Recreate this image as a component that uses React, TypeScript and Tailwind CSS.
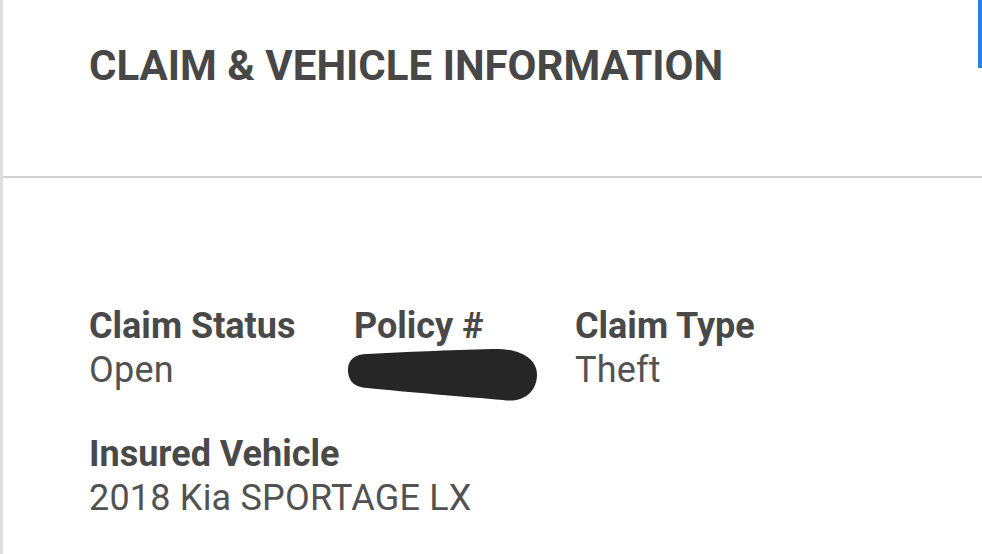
import React from "react";

const font = { fontFamily: "Roboto, 'Noto Sans', sans-serif" };

function Field({ label, value, width }: { label: string; value: React.ReactNode; width?: string }) {
  return (
    <div className={`flex flex-col ${width ?? ""}`}>
      <div className="text-[36px] leading-[44px] font-bold text-[#494949] whitespace-nowrap">{label}</div>
      <div className="text-[36px] leading-[44px] font-normal text-[#525252] whitespace-nowrap tracking-[0.2px]">{value}</div>
    </div>
  );
}

function Redacted() {
  return (
    <div className="h-[44px] relative">
      <svg width="194" height="56" viewBox="0 0 194 56" className="absolute left-[-7px] top-0 overflow-visible">
        <path
          d="M 1 24 C 0 12, 8 6, 20 6 C 60 4, 100 2, 145 1 C 175 0, 191 12, 190 28 C 189 46, 174 55, 156 52 C 120 49, 60 44, 20 40 C 8 39, 2 34, 1 24 Z"
          fill="#262626"
        />
      </svg>
    </div>
  );
}

export default function App() {
  return (
    <div className="w-[982px] h-[554px] bg-white border-l-[3px] border-[#dedede] flex flex-col overflow-hidden" style={font}>
      <div className="h-[178px] flex border-b-2 border-[#d2d2d2]">
        <div className="flex-1 pl-[86px] pt-[41px]">
          <h1 className="text-[42px] leading-[50px] font-bold text-[#474747]">CLAIM &amp; VEHICLE INFORMATION</h1>
        </div>
        <div className="w-[4px] h-[68px] bg-[#1e88e5]" />
      </div>
      <div className="pl-[86px] pt-[126px] flex flex-col gap-[40px]">
        <div className="flex">
          <Field label="Claim Status" value="Open" width="w-[265px]" />
          <Field label="Policy #" value={<Redacted />} width="w-[221px]" />
          <Field label="Claim Type" value="Theft" />
        </div>
        <div className="flex">
          <Field label="Insured Vehicle" value="2018 Kia SPORTAGE LX" />
        </div>
      </div>
    </div>
  );
}
